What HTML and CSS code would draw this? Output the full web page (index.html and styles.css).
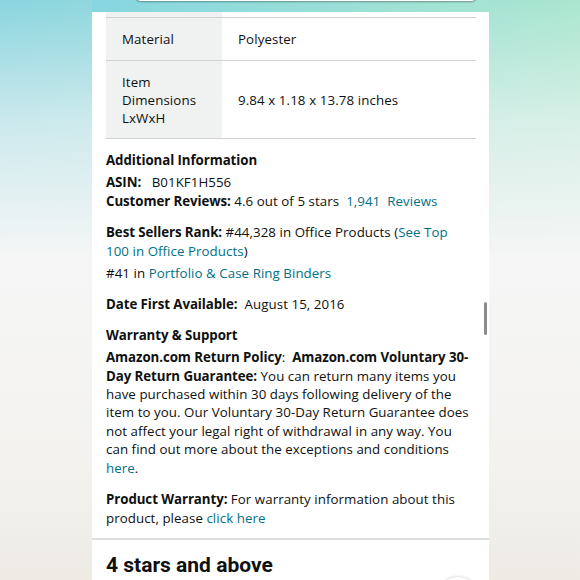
FILE: index.html
```html
<!DOCTYPE html>
<html lang="en">
<head>
<meta charset="utf-8">
<title>Product details</title>
<link rel="stylesheet" href="styles.css">
</head>
<body>
<div class="screen">
  <div class="column">
    <div class="header"><div class="search"></div></div>
    <div class="card">
      <table class="specs">
        <tr class="cut"><th></th><td></td></tr>
        <tr class="row1"><th>Material</th><td>Polyester</td></tr>
        <tr class="row2"><th>Item<br>Dimensions<br>LxWxH</th><td>9.84 x 1.18 x 13.78 inches</td></tr>
      </table>
      <div class="info">
        <p class="title">Additional Information</p>
        <p class="asin"><b>ASIN:</b>&nbsp;&nbsp; B01KF1H556</p>
        <p><b>Customer Reviews:</b> 4.6 out of 5 stars &nbsp;<a>1,941&nbsp; Reviews</a></p>
        <p class="gap"><b>Best Sellers Rank:</b> #44,328 in Office Products (<a>See Top 100 in Office Products</a>)</p>
        <p class="gap-s">#41 in <a>Portfolio &amp; Case Ring Binders</a></p>
        <p class="gap"><b>Date First Available:</b>&nbsp; August 15, 2016</p>
        <p class="gap-w title">Warranty &amp; Support</p>
        <p class="gap-t"><b>Amazon.com Return Policy</b>:&nbsp; <b>Amazon.com Voluntary 30-Day Return Guarantee:</b> You can return many items you have purchased within 30 days following delivery of the item to you. Our Voluntary 30-Day Return Guarantee does not affect your legal right of withdrawal in any way. You can find out more about the exceptions and conditions <a>here</a>.</p>
        <p class="gap"><b>Product Warranty:</b> For warranty information about this product, please <a>click here</a></p>
      </div>
      <div class="scrollbar"></div>
    </div>
    <div class="section">
      <h2>4 stars and above</h2>
      <div class="fab"></div>
    </div>
  </div>
</div>
</body>
</html>
```
FILE: styles.css
```css
html, body {
  margin: 0;
  padding: 0;
}
body {
  width: 580px;
  height: 580px;
  overflow: hidden;
  font-family: "Open Sans", "Noto Sans", sans-serif;
  color: #0f1111;
}
.screen {
  width: 580px;
  height: 580px;
  overflow: hidden;
  background:
    linear-gradient(to bottom, rgba(246,246,246,0) 0px, rgba(246,246,246,0.6) 120px, #f6f6f6 260px, #f3f2ef 470px, #eeebe5 580px),
    linear-gradient(to right, #8ad5df 0%, #98dcd8 50%, #a9e6cf 100%);
}
.column {
  margin-left: 92px;
  width: 397px;
  height: 580px;
}
.header {
  height: 12px;
  overflow: hidden;
  background: linear-gradient(to right, #86d6e0, #a6e5d2);
}
.search {
  margin: -30px 12px 0 43px;
  height: 31px;
  background: #fff;
  border-radius: 0 0 6px 6px;
  box-shadow: 0 1px 2px rgba(0,0,0,0.35);
}
.card {
  position: relative;
  background: #fff;
  padding: 0 13px 11px 14px;
  border-bottom: 2px solid #dcdede;
}
.specs {
  width: 100%;
  border-collapse: collapse;
  font-size: 13.3px;
  line-height: 18px;
  letter-spacing: 0.1px;
}
.specs th {
  width: 100px;
  background: #f0f2f2;
  text-align: left;
  font-weight: normal;
  padding: 0 0 0 16px;
}
.specs td {
  padding: 0 0 0 16px;
}
.specs .cut th, .specs .cut td { height: 5px; }
.specs .row1 th, .specs .row1 td {
  height: 42px;
  border-top: 1px solid #cfd3d3;
}
.specs .row2 th, .specs .row2 td {
  height: 77px;
  border-top: 1px solid #cfd3d3;
  border-bottom: 1px solid #cfd3d3;
}
.info {
  padding-top: 12px;
  padding-right: 3px;
  font-size: 13.3px;
  line-height: 18.4px;
  letter-spacing: 0.06px;
}
.info p {
  margin: 0;
}
.info b, .info .title {
  font-weight: bold;
  letter-spacing: -0.08px;
}
.info .asin {
  margin-top: 4px;
}
.info .gap { margin-top: 13px; }
.info .gap-w { margin-top: 12px; }
.info .gap-s { margin-top: 4px; }
.info .gap-t { margin-top: 4px; }
.info a {
  color: #007185;
  text-decoration: none;
}
.scrollbar {
  position: absolute;
  left: 392px;
  top: 290px;
  width: 3px;
  height: 33px;
  border-radius: 2px;
  background: #8c8c8c;
}
.section {
  position: relative;
  background: #fff;
  height: 60px;
  padding: 11px 14px 0;
}
.section h2 {
  margin: 0;
  font-family: Roboto, "Open Sans", sans-serif;
  font-size: 21px;
  line-height: 28px;
  font-weight: bold;
}
.fab {
  position: absolute;
  left: 345px;
  top: 37px;
  width: 42px;
  height: 42px;
  border-radius: 50%;
  background: #fff;
  box-shadow: 0 0 3px rgba(0,0,0,0.25);
}
```
